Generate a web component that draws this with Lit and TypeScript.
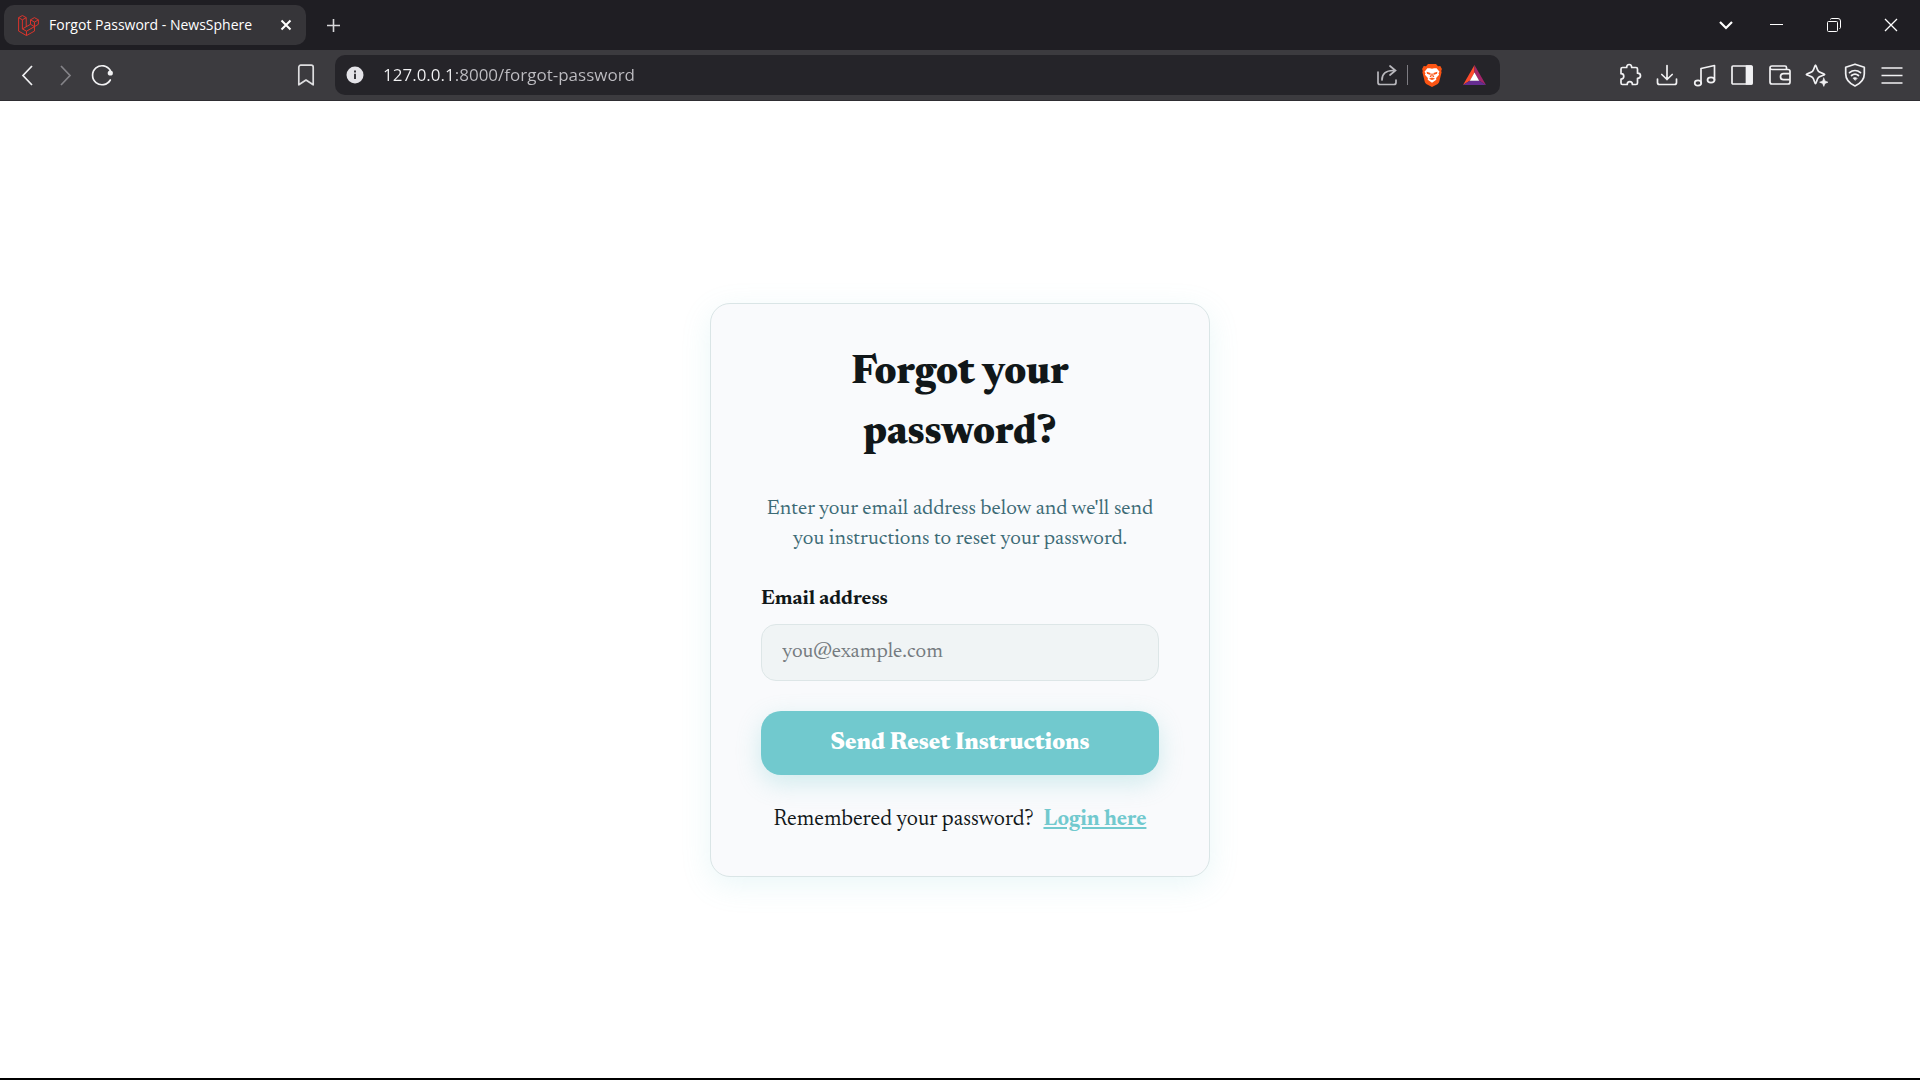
import { LitElement, html, css, svg } from "lit";
import { customElement, state } from "lit/decorators.js";

const icon = (body: unknown, size = 24) => html`
  <svg width=${size} height=${size} viewBox="0 0 24 24" fill="none" stroke="currentColor"
    stroke-width="1.7" stroke-linejoin="round" stroke-linecap="round" aria-hidden="true">${body}</svg>`;

const glyphs = {
  back: svg`<path d="M17 3 8 12.500 17 22" stroke-linecap="butt" stroke-linejoin="miter"/>`,
  forward: svg`<path d="M8 3 17 12.500 8 22" stroke-linecap="butt" stroke-linejoin="miter"/>`,
  reload: svg`<path d="M19.300 17A9.500 9.500 0 1 1 19.300 7.500"/><circle cx="19.300" cy="10" r="2.600" fill="currentColor" stroke="none"/>`,
  bookmark: svg`<path d="M4.800 4.200a2 2 0 0 1 2-2h10.400a2 2 0 0 1 2 2v17.600L12 17l-7.200 4.800z"/>`,
  share: svg`<path d="M3 9v10.500a2 2 0 0 0 2 2h14a2 2 0 0 0 2-2V17M7 17c0-6 4-9.500 11-9.500M15 3l5.500 4.500L15 12" stroke-linejoin="miter"/>`,
  puzzle: svg`<path d="M4.500 4.500h4.200c0-1.800.8-3 2.500-3s2.500 1.200 2.500 3h4.300c.9 0 1.500.6 1.500 1.500v4.200c1.800 0 3 .9 3 2.600s-1.200 2.600-3 2.600V20c0 .9-.6 1.500-1.500 1.500h-3.600c0-1.800-.9-2.900-2.600-2.900s-2.600 1.100-2.600 2.900H4.500c-.9 0-1.500-.6-1.500-1.500v-4c1.800 0 2.800-1 2.800-2.700S4.800 10.700 3 10.700V6c0-.9.600-1.500 1.500-1.500z"/>`,
  download: svg`<path d="M12 2.500v14M6.800 11.500l5.200 5 5.200-5M2.500 16v3.500a2 2 0 0 0 2 2h15a2 2 0 0 0 2-2V16"/>`,
  music: svg`<path d="M8 20V5.500l13.500-3V17"/><ellipse cx="5" cy="20" rx="3.300" ry="2.600"/><ellipse cx="18" cy="17" rx="3.500" ry="2.600"/>`,
  panel: svg`<rect x="2" y="3" width="20" height="18" rx="1"/><path d="M16.500 3H21a1 1 0 0 1 1 1v16a1 1 0 0 1-1 1h-4.500z" fill="currentColor"/>`,
  wallet: svg`<path d="M18.500 6.500V4.500a1.500 1.500 0 0 0-1.500-1.500H4a2 2 0 0 0-2 2v14a2 2 0 0 0 2 2h16a2 2 0 0 0 2-2V8.500a2 2 0 0 0-2-2H4a2 2 0 0 1-2-1.500M22 10.700h-6.500a3 3 0 0 0 0 6H22"/>`,
  sparkle: svg`<path d="M10.500 2.200c.9 0 1.200 4.400 3 6.200s6.200 2.100 6.200 3-4.400 1.200-6.200 3-2.100 6.200-3 6.200-1.200-4.400-3-6.200-6.200-2.100-6.200-3 4.400-1.200 6.200-3 2.100-6.200 3-6.200z"/><path d="m18.800 15 1.200 3 3 1.200-3 1.200-1.200 3-1.200-3-3-1.200 3-1.200z" fill="currentColor" stroke-width=".6"/>`,
  shield: svg`<path d="M12 1.200 21.300 4.300V11c0 5.500-3.300 9.200-9.300 12-6-2.800-9.300-6.500-9.300-12V4.300z"/><path d="M6.500 9.700c3.300-2.900 7.700-2.900 11 0M8.500 12.500c2.200-1.800 4.800-1.800 7 0"/><path d="M12 17.200l-2-2c1.200-.9 2.800-.9 4 0z" fill="currentColor" stroke-width=".6"/>`,
  menu: svg`<path d="M1.500 5h21M1.500 12.500h21M1.500 20h21" stroke-linecap="butt"/>`,
};

const tools: Array<[string, unknown]> = [
  ["Extensions", glyphs.puzzle],
  ["Downloads", glyphs.download],
  ["Media", glyphs.music],
  ["Sidebar", glyphs.panel],
  ["Wallet", glyphs.wallet],
  ["Assistant", glyphs.sparkle],
  ["VPN", glyphs.shield],
  ["Menu", glyphs.menu],
];

const resets = css`
  :host, * { box-sizing: border-box; }
  button {
    border: 0;
    padding: 0;
    background: none;
    color: inherit;
    font: inherit;
    display: grid;
    place-items: center;
  }
  svg { display: block; }
`;

@customElement("tab-strip")
export class TabStrip extends LitElement {
  static styles = [resets, css`
    :host {
      display: flex;
      align-items: stretch;
      height: 50px;
      padding: 0 1px 0 4px;
      background: #1f1e23;
      color: #fff;
      font: 14px/20px "Segoe UI", "Open Sans", "Noto Sans", sans-serif;
    }
    .tab {
      display: flex;
      align-items: center;
      width: 302px;
      margin: 5px 0;
      padding: 0 8px 0 14px;
      gap: 10px;
      border-radius: 10px;
      background: #363539;
    }
    .favicon { color: #e0342c; flex: none; }
    .title { flex: 1; white-space: nowrap; overflow: hidden; }
    .close { width: 24px; height: 24px; }
    .new { width: 54px; }
    .window { display: flex; margin-left: auto; }
    .list { width: 44px; }
    .control { width: 57px; }
  `];

  render() {
    return html`
      <div class="tab">
        <svg class="favicon" width="21" height="21" viewBox="0 0 24 24" fill="none" stroke="currentColor"
          stroke-width="1.100" stroke-linejoin="round" aria-hidden="true">
          <path d="M.7 3 5 .6 9.400 3 5 5.500zM.7 3v15.400l9 5.100 9.100-5.100v-5.100M5 5.500v10.400l4.700 2.600v5M9.700 18.500l9.100-5.200M9.400 3v10.300M5 15.900l9.300-5.300M14.300 5.500 18.800 3l4.500 2.500-4.500 2.600zM14.300 5.500v5.100l4.500 2.700 4.500-2.700V5.500M18.800 8.100v5.200"/>
        </svg>
        <span class="title">Forgot Password - NewsSphere</span>
        <button class="close" aria-label="Close tab">
          <svg width="12" height="12" viewBox="0 0 12 12" stroke="currentColor" stroke-width="2"><path d="m1.500 1.500 9 9m0-9-9 9"/></svg>
        </button>
      </div>
      <button class="new" aria-label="New tab">
        <svg width="15" height="15" viewBox="0 0 15 15" stroke="#d8d8da" stroke-width="1.600"><path d="M7.500 1v13M1 7.500h13"/></svg>
      </button>
      <div class="window">
        <button class="list" aria-label="Search tabs">
          <svg width="14" height="10" viewBox="0 0 14 10" fill="none" stroke="currentColor" stroke-width="2.200"><path d="m1 2 6 6 6-6"/></svg>
        </button>
        <button class="control" aria-label="Minimize">
          <svg width="13" height="13" viewBox="0 0 13 13" stroke="currentColor"><path d="M0 5.500h13"/></svg>
        </button>
        <button class="control" aria-label="Restore">
          <svg width="14" height="14" viewBox="0 0 14 14" fill="none" stroke="currentColor">
            <rect x=".5" y="3.500" width="10" height="10" rx="1"/><path d="M3.500 1.500c0-.6.400-1 1-1H11A2.500 2.500 0 0 1 13.500 3v6.500c0 .6-.4 1-1 1"/>
          </svg>
        </button>
        <button class="control" aria-label="Close window">
          <svg width="14" height="14" viewBox="0 0 14 14" stroke="currentColor" stroke-width="1.300"><path d="m1 1 12 12m0-12L1 13"/></svg>
        </button>
      </div>`;
  }
}

@customElement("tool-bar")
export class ToolBar extends LitElement {
  static styles = [resets, css`
    :host {
      display: grid;
      grid-template-columns: 15% minmax(0, 1fr) 420px;
      align-items: center;
      height: 51px;
      background: #3c3b3f;
      border-bottom: 1px solid #2e2d32;
      color: #f1f1f3;
    }
    .nav { display: flex; padding-left: 8px; }
    .nav button { width: 38px; height: 38px; }
    .nav .dim { color: #848388; }
    .middle { display: flex; align-items: center; }
    .mark { width: 36px; height: 38px; margin-right: 11px; color: #dedee0; }
    .address {
      flex: 1;
      display: flex;
      align-items: center;
      height: 40px;
      padding: 0 12px 0 10px;
      border-radius: 10px;
      background: #252429;
    }
    .info { width: 20px; height: 20px; }
    .url {
      flex: 1;
      min-width: 0;
      margin-left: 18px;
      padding: 0;
      border: 0;
      outline: 0;
      background: linear-gradient(90deg, #f2f2f4 72px, #bfbec3 72px);
      background-clip: text;
      color: transparent;
      font: 17px/24px "Segoe UI", "Open Sans", "Noto Sans", sans-serif;
    }
    .share { width: 30px; height: 30px; color: #b9b8bd; }
    .rule { width: 1px; height: 20px; margin: 0 10px 0 5px; background: #7d7c82; }
    .brave { width: 28px; height: 30px; margin-right: 14px; }
    .bat { width: 28px; height: 30px; }
    .tools {
      display: grid;
      grid-template-columns: repeat(8, 1fr);
      width: 300px;
      margin-left: auto;
      margin-right: 9px;
    }
    .tools button { height: 38px; }
  `];

  render() {
    return html`
      <div class="nav">
        <button aria-label="Back">${icon(glyphs.back)}</button>
        <button class="dim" aria-label="Forward">${icon(glyphs.forward)}</button>
        <button aria-label="Reload">${icon(glyphs.reload)}</button>
      </div>
      <div class="middle">
        <button class="mark" aria-label="Bookmark">${icon(glyphs.bookmark)}</button>
        <div class="address">
          <button class="info" aria-label="Site information">
            <svg width="18" height="18" viewBox="0 0 18 18"><circle cx="9" cy="9" r="8.500" fill="#e4e3e8"/><path d="M8 7.700h2V13H8zM8 4.600h2v1.900H8z" fill="#38373c"/></svg>
          </button>
          <input class="url" type="text" aria-label="Address" spellcheck="false" value="127.0.0.1:8000/forgot-password" />
          <button class="share" aria-label="Share">${icon(glyphs.share)}</button>
          <span class="rule"></span>
          <button class="brave" aria-label="Shields">
            <svg width="20" height="23" viewBox="0 0 20 23">
              <path d="M6 0h8l2 2.200 2.300-.2 1.600 3-.7 2 .4 1.200-2.300 9.300c-.4 1.300-1 2.100-2 2.800L10 23l-5.300-2.700c-1-.7-1.600-1.500-2-2.800L.4 8.200.8 7 .1 5l1.600-3L4 2.200z" fill="#fb5413"/>
              <path d="M8 4.200 10 4.700l2-.5 2.600.1 2.900 3.500-1 1.500.6 1.500-3 3.300.2 1.600-4.300 3.100-4.300-3.100.2-1.600-3-3.300.6-1.500-1-1.500 2.900-3.500z" fill="#fff"/>
              <path d="M4.600 7.800 8.500 9l-.5 1.700-3-1zM15.400 7.800 11.500 9l.5 1.700 3-1zM8.700 9.500h1v2.800l-1.200 1-.9-.6.8-1zM11.300 9.500h-1v2.800l1.200 1 .9-.6-.8-1zM6.800 14.800l3.200-1.300 3.200 1.300-3.200 1.300z" fill="#fb5413"/>
            </svg>
          </button>
          <button class="bat" aria-label="Rewards">
            <svg width="23" height="20" viewBox="0 0 23 20">
              <path d="M11.500 0 0 20l7-4.500 4.500-8z" fill="#ff4b2b"/>
              <path d="M11.500 0 23 20l-7-4.500-4.500-8z" fill="#a3256a"/>
              <path d="M0 20h23l-7-4.500H7z" fill="#662d91"/>
              <path d="m11.500 7.500 4.700 8.200H6.800z" fill="#fff"/>
            </svg>
          </button>
        </div>
      </div>
      <div class="tools">
        ${tools.map(([name, glyph]) => html`<button aria-label=${name}>${icon(glyph)}</button>`)}
      </div>`;
  }
}

@customElement("forgot-password")
export class ForgotPassword extends LitElement {
  @state() private email = "";

  static styles = [resets, css`
    :host {
      display: grid;
      place-items: center;
      padding: 21px 20px 20px;
      background: #fff;
      color: #111719;
      font: 21px/30px Newsreader, "Liberation Serif", serif;
    }
    .card {
      width: 100%;
      max-width: 500px;
      padding: 40px 50px 41px;
      border: 1px solid #dae5e6;
      border-radius: 20px;
      background: #f9fafc;
      box-shadow: 0 8px 30px rgba(113, 201, 206, 0.15);
    }
    h1 {
      margin: 0 0 31px;
      font-size: 41px;
      line-height: 60px;
      font-weight: 800;
      text-align: center;
    }
    .lead { margin: 0 0 30px; color: #3d6b76; text-align: center; }
    .label { display: block; margin-bottom: 9px; font-weight: 700; }
    .email {
      display: block;
      width: 100%;
      height: 57px;
      margin-bottom: 30px;
      padding: 0 20px;
      border: 1px solid #dde6e7;
      border-radius: 15px;
      background: #f0f4f5;
      color: inherit;
      font: inherit;
    }
    .email::placeholder { color: #757b80; }
    .send {
      width: 100%;
      height: 64px;
      margin-bottom: 30px;
      border-radius: 20px;
      background: #71c9ce;
      box-shadow: 0 8px 24px rgba(113, 201, 206, 0.3);
      color: #fff;
      font-size: 24px;
      font-weight: 800;
    }
    .login {
      display: flex;
      flex-wrap: wrap;
      justify-content: center;
      gap: 10px;
      margin: 0;
      font-size: 22px;
    }
    .login a {
      color: #71c9ce;
      font-weight: 700;
      text-decoration: underline 2px;
      text-underline-offset: 2px;
    }
  `];

  private onInput(e: Event) {
    this.email = (e.target as HTMLInputElement).value;
  }

  render() {
    return html`
      <form class="card" @submit=${(e: Event) => e.preventDefault()}>
        <h1>Forgot your<br />password?</h1>
        <p class="lead">Enter your email address below and we'll send you instructions to reset your password.</p>
        <label class="label" for="email">Email address</label>
        <input class="email" id="email" type="email" placeholder="you@example.com" .value=${this.email} @input=${this.onInput} />
        <button class="send" type="submit">Send Reset Instructions</button>
        <p class="login"><span>Remembered your password?</span><a href="#login">Login here</a></p>
      </form>`;
  }
}

@customElement("app-root")
export class AppRoot extends LitElement {
  static styles = css`
    :host {
      display: flex;
      flex-direction: column;
      box-sizing: border-box;
      min-height: 100vh;
      border-bottom: 2px solid #000;
      background: #fff;
    }
    .page { flex: 1; }
  `;

  render() {
    return html`
      <tab-strip></tab-strip>
      <tool-bar></tool-bar>
      <forgot-password class="page"></forgot-password>`;
  }
}
